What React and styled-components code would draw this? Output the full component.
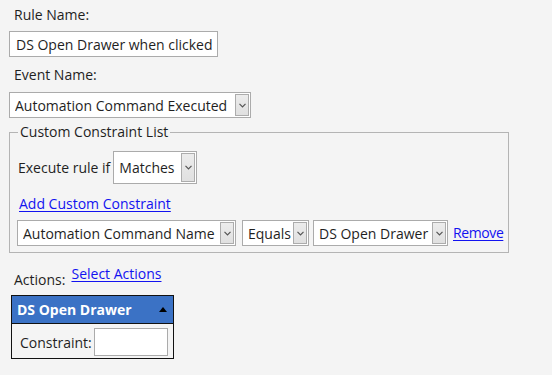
import React from "react";
import styled, { createGlobalStyle } from "styled-components";

const Global = createGlobalStyle`
  html, body { margin: 0; padding: 0; background: #f4f4f4; }
  body { font-family: "Open Sans", "Noto Sans", sans-serif; font-size: 14px; color: #1f1f1f; }
`;

const Page = styled.div`
  width: 552px;
  height: 375px;
  box-sizing: border-box;
  padding: 5px 0 0 9px;
  display: flex;
  flex-direction: column;
  align-items: flex-start;
`;

const Label = styled.div`
  line-height: 20px;
  padding-left: 5px;
  margin-top: ${(p) => p.$mt || 0}px;
`;

const TextBox = styled.div`
  box-sizing: border-box;
  width: ${(p) => p.$w}px;
  height: ${(p) => p.$h || 26}px;
  margin-top: ${(p) => p.$mt || 0}px;
  border: 1px solid #ababab;
  background: #fff;
  padding-left: 6px;
  display: flex;
  align-items: center;
  white-space: nowrap;
  overflow: hidden;
  flex-shrink: 0;
`;

const SelectBox = styled.div`
  box-sizing: border-box;
  width: ${(p) => p.$w}px;
  height: ${(p) => p.$h || 26}px;
  margin-top: ${(p) => p.$mt || 0}px;
  border: 1px solid #ababab;
  background: #fff;
  display: flex;
  align-items: stretch;
  padding: 1px 1px 1px 5px;
  flex-shrink: 0;
`;

const SelectValue = styled.div`
  flex: 1;
  display: flex;
  align-items: center;
  white-space: nowrap;
  overflow: hidden;
`;

const ArrowBtn = styled.div`
  box-sizing: border-box;
  width: 14px;
  border: 1px solid #acacac;
  background: linear-gradient(#ececec, #e0e0e0);
  display: flex;
  align-items: center;
  justify-content: center;
`;

const Select = ({ value, w, h, mt }) => (
  <SelectBox $w={w} $h={h} $mt={mt}>
    <SelectValue>{value}</SelectValue>
    <ArrowBtn>
      <svg width="7" height="5" viewBox="0 0 7 5">
        <path d="M0.5 0.8 L3.5 3.8 L6.5 0.8" fill="none" stroke="#555" strokeWidth="1.2" />
      </svg>
    </ArrowBtn>
  </SelectBox>
);

const Fieldset = styled.fieldset`
  box-sizing: border-box;
  width: 500px;
  margin: 4px 0 0 0;
  padding: 0 0 6px 7px;
  border: 1px solid #b4b4b4;
  min-width: 0;
`;

const Legend = styled.legend`
  line-height: 20px;
  padding: 0 2px;
  margin-left: 1px;
`;

const Row = styled.div`
  display: flex;
  align-items: center;
  gap: ${(p) => p.$gap || 0}px;
  margin-top: ${(p) => p.$mt || 0}px;
`;

const RowText = styled.span`
  padding-left: 1px;
  flex-shrink: 0;
`;

const Link = styled.a`
  color: #1212f0;
  text-decoration: underline;
  text-underline-offset: 2px;
  cursor: pointer;
  line-height: 20px;
  margin-top: ${(p) => p.$mt || 0}px;
  display: inline-block;
  margin-left: ${(p) => p.$ml || 0}px;
  letter-spacing: ${(p) => p.$ls || 0}px;
  flex-shrink: 0;
  white-space: nowrap;
`;

const ConstraintRow = styled.div`
  display: flex;
  align-items: center;
  margin-top: 6px;
  & > :nth-child(2) { margin-left: 6px; }
  & > :nth-child(3) { margin-left: 4px; }
  & > :nth-child(4) { margin-left: 5px; }
`;

const ActionsRow = styled.div`
  display: flex;
  align-items: flex-start;
  margin-top: 11px;
`;

const ActionsLabel = styled.span`
  line-height: 20px;
  margin-top: 6px;
  padding-left: 5px;
`;

const Panel = styled.div`
  box-sizing: border-box;
  width: 163px;
  margin: 5px 0 0 2px;
  border: 1px solid #111;
  background: #f4f4f4;
`;

const PanelHeader = styled.div`
  height: 27px;
  background: #3b72c5;
  border-bottom: 1px solid #111;
  color: #fff;
  font-weight: 700;
  display: flex;
  align-items: center;
  justify-content: space-between;
  padding: 0 6px 0 5px;
`;

const PanelBody = styled.div`
  display: flex;
  align-items: center;
  padding: 4px 4px 2px 8px;
  gap: 2px;
`;

export default function App() {
  return (
    <>
      <Global />
      <Page>
        <Label>Rule Name:</Label>
        <TextBox $w={209} $mt={6}>DS Open Drawer when clicked</TextBox>
        <Label $mt={8}>Event Name:</Label>
        <Select value="Automation Command Executed" w={242} mt={7} />
        <Fieldset>
          <Legend>Custom Constraint List</Legend>
          <Row $mt={9} $gap={3}>
            <RowText>Execute rule if</RowText>
            <Select value="Matches" w={84} h={33} />
          </Row>
          <Link $mt={10} $ml={2}>Add Custom Constraint</Link>
          <ConstraintRow>
            <Select value="Automation Command Name" w={219} />
            <Select value="Equals" w={67} />
            <Select value="DS Open Drawer" w={135} />
            <Link $ls={-0.4}>Remove</Link>
          </ConstraintRow>
        </Fieldset>
        <ActionsRow>
          <ActionsLabel>Actions:</ActionsLabel>
          <Link $ml={6}>Select Actions</Link>
        </ActionsRow>
        <Panel>
          <PanelHeader>
            <span>DS Open Drawer</span>
            <svg width="8" height="5" viewBox="0 0 8 5">
              <path d="M0 5 L4 0 L8 5 Z" fill="#000" />
            </svg>
          </PanelHeader>
          <PanelBody>
            <span>Constraint:</span>
            <TextBox $w={74} $h={28} />
          </PanelBody>
        </Panel>
      </Page>
    </>
  );
}
